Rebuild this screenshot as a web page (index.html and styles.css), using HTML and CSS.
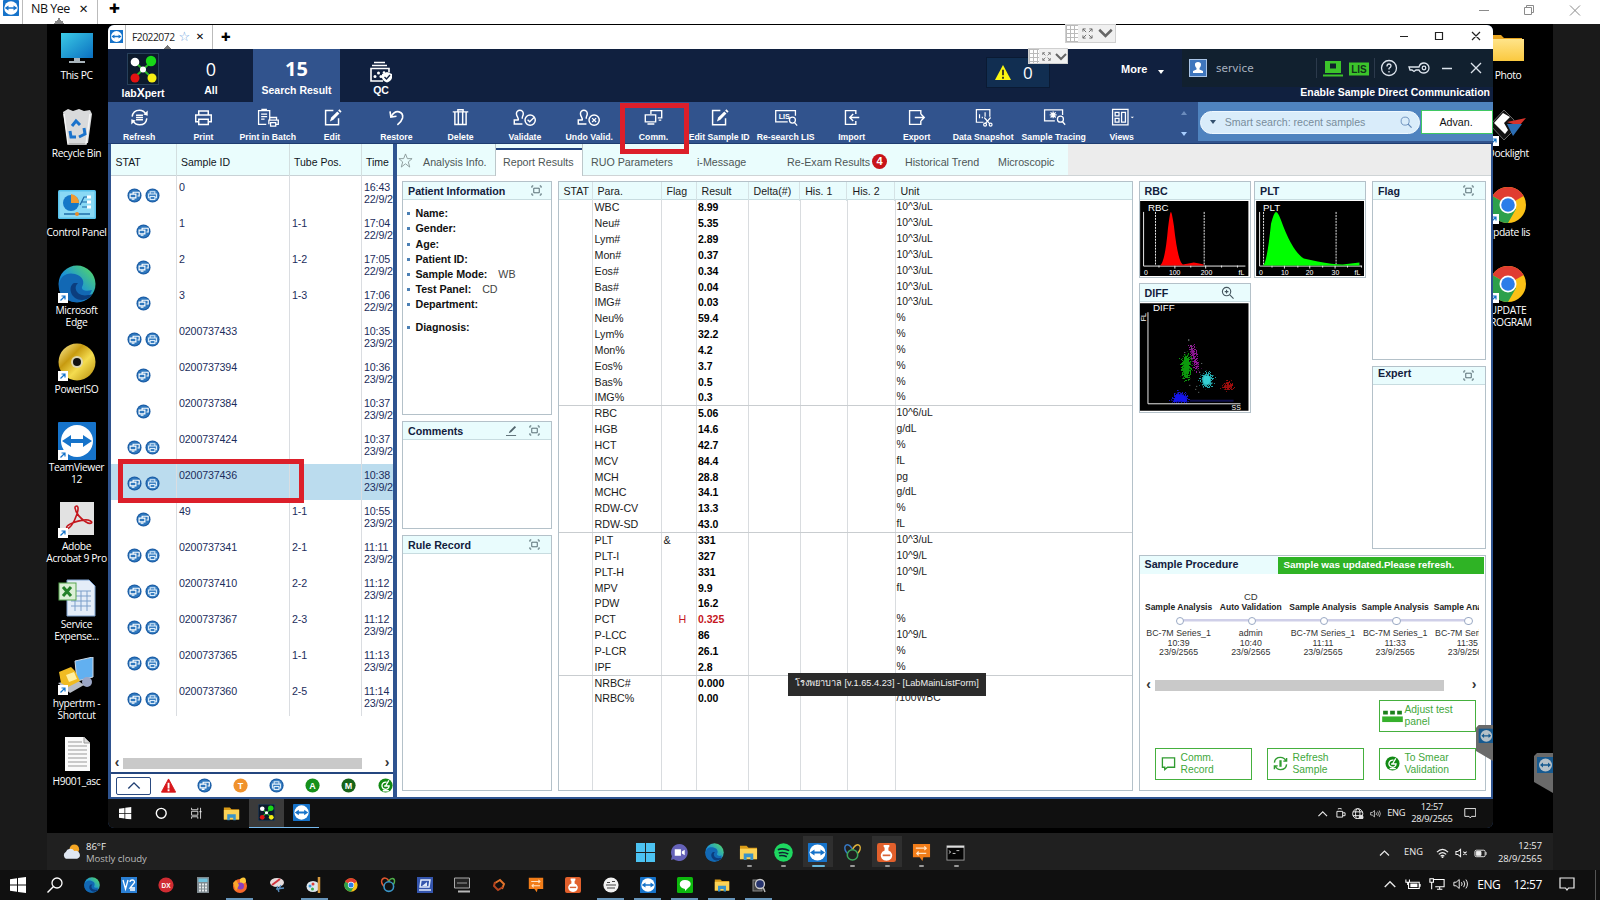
FILE: index.html
```html
<!DOCTYPE html>
<html lang="en">
<head>
<meta charset="utf-8">
<title>labXpert remote session</title>
<link rel="stylesheet" href="styles.css">
</head>
<body>
<svg class="defs" width="0" height="0">
  <defs>
    <linearGradient id="gEdge" x1="0" y1="1" x2="1" y2="0"><stop offset="0" stop-color="#0c4f9c"/><stop offset=".45" stop-color="#1b93d8"/><stop offset="1" stop-color="#5be05a"/></linearGradient>
    <linearGradient id="gScreen" x1="0" y1="0" x2="1" y2="1"><stop offset="0" stop-color="#3bcbe6"/><stop offset="1" stop-color="#0a6fc0"/></linearGradient>
    <linearGradient id="gGold" x1="0" y1="0" x2="1" y2="1"><stop offset="0" stop-color="#fff2a0"/><stop offset=".35" stop-color="#c79a10"/><stop offset=".6" stop-color="#f4dc50"/><stop offset="1" stop-color="#b38806"/></linearGradient>
    <linearGradient id="gFolder" x1="0" y1="0" x2="0" y2="1"><stop offset="0" stop-color="#ffe48a"/><stop offset="1" stop-color="#fbc93f"/></linearGradient>
    <filter id="speckle" x="-60%" y="-60%" width="220%" height="220%"><feTurbulence type="fractalNoise" baseFrequency=".9" numOctaves="2" seed="4"/><feDisplacementMap in="SourceGraphic" scale="13" xChannelSelector="R" yChannelSelector="G"/></filter>
    <symbol id="tv" viewBox="0 0 38 38"><rect width="38" height="38" rx="1" fill="#1673ca"/><circle cx="19" cy="19" r="16" fill="#fff"/><path d="M4 19l9-6v4h12v-4l9 6-9 6v-4H13v4z" fill="#1673ca"/></symbol>
    <symbol id="edge" viewBox="0 0 38 38"><circle cx="19" cy="19" r="18.5" fill="url(#gEdge)"/><path d="M1 22C1 10 10 7 17 9c8 2 10 8 7 13-1 3 4 5 10 3-3 8-10 12.500-17 12C7 36 1 30 1 22z" fill="#1268b4"/><path d="M16 18c-7 4-3 17 8 17 5 0 9-3 10-6-8 3-14 1-16-4-1-3 0-5 2-7z" fill="#0b3d7e"/></symbol>
    <symbol id="chrome" viewBox="0 0 38 38"><circle cx="19" cy="19" r="18" fill="#fbc116"/><path d="M19 19L3.400 10A18 18 0 0 1 34.600 10z" fill="#e03c31"/><path d="M3.400 10A18 18 0 0 0 19 37l8-14-8-4z" fill="#2da04b"/><circle cx="19" cy="19" r="8.500" fill="#fff"/><circle cx="19" cy="19" r="6.800" fill="#2b7de9"/></symbol>
    <symbol id="short" viewBox="0 0 10 10"><rect width="10" height="10" fill="#fff"/><path d="M2.500 7.500L7 3M3.500 3H7v3.500" fill="none" stroke="#1373c9" stroke-width="1.200"/></symbol>
    <symbol id="folder" viewBox="0 0 20 20"><path d="M1 3h7l2 2h9v12H1z" fill="#d99b17"/><path d="M1 6h18v11H1z" fill="#fbd357"/><path d="M5 11h10v7h-3v-3H8v3H5z" fill="#3a94c9"/></symbol>
    <symbol id="xpert" viewBox="0 0 32 32"><rect x=".5" y=".5" width="31" height="31" fill="#0c1a2c" stroke="#27405a"/><path d="M8 9l16 15M24 9L8 24" stroke="#2bb52b" stroke-width="2"/><circle cx="8" cy="9" r="4.300" fill="#fff"/><circle cx="24" cy="8" r="5.200" fill="#18d818"/><circle cx="8" cy="25" r="4.500" fill="#e31212"/><circle cx="25" cy="25" r="4.500" fill="#f6ee13"/><circle cx="16" cy="16.500" r="3" fill="#fff"/></symbol>
    <symbol id="ccomm" viewBox="0 0 16 16"><circle cx="8" cy="8" r="7.500" fill="#185aa3"/><circle cx="8" cy="8" r="6.300" fill="#2f78be"/><path d="M6.500 6V4.500H13v4h-1.800M3.300 6.500h6.200v4H3.300zM5 12h3" fill="none" stroke="#fff" stroke-width="1.200"/></symbol>
    <symbol id="cprint" viewBox="0 0 16 16"><circle cx="8" cy="8" r="7.500" fill="#185aa3"/><circle cx="8" cy="8" r="6.300" fill="#3b80c2"/><path d="M5.500 6.500V4h5v2.500M5 10.500H3.800v-4h8.400v4H11M5.500 9h5v3.300h-5z" fill="none" stroke="#dcecfa" stroke-width="1.100"/></symbol>
    <symbol id="expand" viewBox="0 0 12 12"><path d="M3 3.500h6v5H3zM1 3V1h1.500M9.500 1H11v2M11 9v2H9.500M2.500 11H1V9" fill="none" stroke="#4a6068" stroke-width="1"/></symbol>
    <symbol id="pen" viewBox="0 0 22 22"><path d="M12 3H3v16.500h15V12" fill="none" stroke="#fff" stroke-width="1.700"/><path d="M8 15.500l1.500-4.500 7-7 2.500 2.500-7 7z" fill="#fff"/><path d="M17.500 3l1.500-1.500L21.500 4 20 5.500z" fill="#fff"/></symbol>
    <symbol id="stamp" viewBox="0 0 28 22"><path d="M11 18.500H1.500V14H6c1-3-2-4-2-7.500a4 4 0 0 1 8 0c0 3-2 4-1 6" fill="none" stroke="#fff" stroke-width="1.700"/><circle cx="20" cy="14" r="6" fill="none" stroke="#fff" stroke-width="1.700"/></symbol>
    <symbol id="win10" viewBox="0 0 16 16"><path d="M0 2.200L7 1.200V7.600H0zM8 1l8-1v7.600H8zM0 8.500h7v6.300l-7-1zM8 8.500h8V16l-8-1z" fill="#fff"/></symbol>
    <symbol id="up" viewBox="0 0 12 12"><path d="M1.500 8.500L6 4l4.500 4.500" fill="none" stroke="#e8e8e8" stroke-width="1.200"/></symbol>
    <symbol id="speaker" viewBox="0 0 18 14"><path d="M1 5v4h2.500L7 12V2L3.500 5zM9.500 5q1.500 2 0 4M12 3.500q2.500 3.500 0 7M14.500 2q3.500 5 0 10" fill="none" stroke="#eee" stroke-width="1.100"/></symbol>
    <symbol id="note" viewBox="0 0 16 16"><path d="M1 2h14v10H9.500L8 14l-1.500-2H1z" fill="none" stroke="#eee" stroke-width="1.200"/></symbol>
    <symbol id="flask" viewBox="0 0 20 20"><rect width="20" height="20" rx="2.500" fill="#e2602c"/><path d="M7 2h6v2l-1 1v3a6 5.500 0 1 1-4 0V5L7 4z" fill="#fff"/><path d="M6 13h8" stroke="#d9643a" stroke-width="1.800"/></symbol>
    <symbol id="board" viewBox="0 0 20 20"><path d="M1 1h18v14h-7l-1 4-3-4H1z" fill="#f27d19"/><path d="M4 5.500h11m-2-2l2 2-2 2M15 11H5m2-2l-2 2 2 2" stroke="#ffe3c5" stroke-width="1.300" fill="none"/></symbol>
    <symbol id="rings" viewBox="0 0 20 20"><g fill="none" stroke-width="1.600"><ellipse cx="6" cy="7" rx="3.500" ry="5.500" transform="rotate(-30 6 7)" stroke="#3578c4"/><ellipse cx="14" cy="7" rx="3.500" ry="5.500" transform="rotate(30 14 7)" stroke="#e0b43b"/><circle cx="10" cy="12.500" r="5.500" stroke="#3ba65c" fill="#202020"/></g></symbol>
    <symbol id="float" viewBox="0 0 19 40"><path d="M19 0H3L0 3v26l19 11z" fill="#6a6a6a"/><rect x="3" y="4" width="16" height="16" fill="#175a90"/><circle cx="11.500" cy="12" r="6.500" fill="#b5c0c8"/><path d="M6 12l3-2.500v1.700h5V9.500l3 2.500-3 2.500v-1.700H9v1.700z" fill="#175a90"/></symbol>
    <symbol id="smear" viewBox="0 0 16 16"><circle cx="8" cy="8" r="7.500" fill="#128a14"/><path d="M11.500 2.500L8 8.500M9 4.500A3.800 3.800 0 1 0 11.800 8.500H6.500M8.500 12v1.500M5 13.500h6.500" fill="none" stroke="#fff" stroke-width="1.400"/></symbol>
    <symbol id="arrows" viewBox="0 0 12 12"><path d="M1 4V1h3M8 1h3v3M11 8v3H8M4 11H1V8M1 1l3.500 3.500M11 1L7.500 4.500M1 11l3.500-3.500M11 11L7.500 7.500" fill="none" stroke="#666" stroke-width="1"/></symbol>
  </defs>
</svg>

<header class="outer-tabs">
  <svg class="tvi"><use href="#tv"/></svg>
  <div class="otab">NB Yee <b>✕</b></div>
  <b class="plus">✚</b>
  <svg class="winctl" viewBox="0 0 110 14"><g fill="none" stroke="#8b8b8b"><path d="M2 7.500h10M47.500 4.500h7v7h-7zM49.500 4.500v-2h7v7h-2M93 2.500l10 10M103 2.500l-10 10"/></g></svg>
</header>

<main class="remote">
  <section class="desk-col left">
    <div class="dicon"><svg viewBox="0 0 38 38"><rect x="3" y="3" width="32" height="25" fill="url(#gScreen)"/><path d="M16 28h6v3h5v2H11v-2h5z" fill="#a9b4bb"/></svg><span>This PC</span></div>
    <div class="dicon"><svg viewBox="0 0 38 38"><path d="M5 4l5-3 5 2 6-2 5 2 6-1 2 4-4 29H10z" fill="#d9dadb"/><path d="M6 6l4 30h18l4-30" fill="none" stroke="#f5f5f5" stroke-width="1.500"/><g fill="none" stroke="#1b73cc" stroke-width="3"><path d="M14 18l4-5 4 4M26 20l1 6-6 3M18 29h-5l-1-6"/></g></svg><span>Recycle Bin</span></div>
    <div class="dicon"><svg viewBox="0 0 38 38"><rect x="0" y="4" width="38" height="29" rx="1.500" fill="#58c1ea"/><rect x="1.500" y="5.500" width="35" height="26" fill="#8ad9f5"/><circle cx="13" cy="17" r="8" fill="#1678c8"/><path d="M13 17V8a9 9 0 0 1 8 9z" fill="#f19a31"/><path d="M22 19l4-8h3M24 16h5M24 21h5" stroke="#1d6aa7" stroke-width="1.200" fill="none"/><path d="M29 11h4M29 16h4M29 21h4" stroke="#fff" stroke-width="3"/><path d="M6 28h26" stroke="#1c6ca8" stroke-width="1.500"/><circle cx="19" cy="28" r="2" fill="#e98b28"/></svg><span>Control Panel</span></div>
    <div class="dicon"><svg><use href="#edge"/></svg><svg class="sc"><use href="#short"/></svg><span>Microsoft<br>Edge</span></div>
    <div class="dicon"><svg viewBox="0 0 38 38"><circle cx="19" cy="19" r="18.500" fill="url(#gGold)"/><circle cx="19" cy="19" r="6" fill="#ddd6b0"/><circle cx="19" cy="19" r="4" fill="#111"/></svg><svg class="sc"><use href="#short"/></svg><span>PowerISO</span></div>
    <div class="dicon"><svg><use href="#tv"/></svg><svg class="sc"><use href="#short"/></svg><span>TeamViewer<br>12</span></div>
    <div class="dicon"><svg viewBox="0 0 38 38"><rect x="2" y="2" width="34" height="33" fill="#e2e2e2"/><path d="M17 7c3-3 4 1 2 7-3 9-8 16-10 14-3-3 14-9 21-8 7 2 3 5-2 2-5-3-11-9-11-15z" fill="none" stroke="#c4161c" stroke-width="1.600"/></svg><svg class="sc"><use href="#short"/></svg><span>Adobe<br>Acrobat 9 Pro</span></div>
    <div class="dicon"><svg viewBox="0 0 38 38"><path d="M9 1h22l6 6v30H9z" fill="#e4edf8" stroke="#7fa3d0"/><path d="M13 12h20M13 17h20M13 22h20M13 27h20M17 12v20M23 12v20M29 12v20" stroke="#7c9fca"/><rect x="1" y="4" width="17" height="17" fill="#dcf0d7" stroke="#58a550"/><path d="M5 8l8 9M13 8l-8 9" stroke="#24812a" stroke-width="3"/></svg><span>Service<br>Expense...</span></div>
    <div class="dicon"><svg viewBox="0 0 38 38"><path d="M17 4l18-4v20l-16 4z" fill="#62b0f0" stroke="#cfd9e6"/><circle cx="29" cy="25" r="5" fill="#9ba6c6"/><path d="M0 26l18-4 8 6-14 8z" fill="#b8bdc7"/><path d="M1 15l12-5 4 4 5 10-12 6-7-4z" fill="#f0bb22"/><path d="M8 18l8-3 3 7-8 3z" fill="#fff0a2"/></svg><svg class="sc"><use href="#short"/></svg><span>hypertrm -<br>Shortcut</span></div>
    <div class="dicon"><svg viewBox="0 0 38 38"><path d="M7 2h19l6 6v28H7z" fill="#fafafa"/><path d="M10 7h14M10 11h19M10 15h19M10 19h19M10 23h19M10 27h19M10 31h19" stroke="#999"/><path d="M26 2v6h6" fill="#ddd" stroke="#999"/></svg><span>H9001_asc</span></div>
  </section>

  <section class="desk-col right">
    <div class="dicon"><svg viewBox="0 0 38 38"><path d="M0 5h12l3 3h18v6H0z" fill="#e8a520"/><path d="M0 9h35v22H0z" fill="url(#gFolder)"/></svg><span>Photo</span></div>
    <div class="dicon"><svg viewBox="0 0 38 38"><path d="M15 2L1 17l14 15 10-10V12z" fill="#111" stroke="#666"/><path d="M14 5L5 15l11 11 3-4-4-7 6-6z" fill="#fff"/><path d="M18 14l19-4-7 8z" fill="#d8322a"/><path d="M18 16l15 0-9 12z" fill="#2c6eb5"/></svg><svg class="sc"><use href="#short"/></svg><span>Docklight</span></div>
    <div class="dicon"><svg><use href="#chrome"/></svg><svg class="sc"><use href="#short"/></svg><span>Update lis</span></div>
    <div class="dicon"><svg><use href="#chrome"/></svg><svg class="sc"><use href="#short"/></svg><span>UPDATE<br>PROGRAM</span></div>
  </section>

  <section class="window">
    <div class="win-tabs">
      <svg class="tvi"><use href="#tv"/></svg>
      <div class="wtab">F2022072 <i>☆</i><b>✕</b></div>
      <b class="plus">✚</b>
      <svg class="winctl" viewBox="0 0 90 14"><g fill="none" stroke="#222" stroke-width="1.200"><path d="M3 7.500h8M38.500 3.500h7v7h-7zM75 3l8 8M83 3l-8 8"/></g></svg>
    </div>

    <div class="app-head">
      <div class="logo"><svg><use href="#xpert"/></svg><b>lab<em>X</em>pert</b></div>
      <div class="hcell all"><span>0</span><b>All</b></div>
      <div class="hcell found"><strong>15</strong><b>Search Result</b></div>
      <div class="hcell qc"><svg viewBox="0 0 24 22"><g fill="none" stroke="#fff" stroke-width="1.600"><path d="M5 1.500h11M3 4.500h15M14 20H2V7.500h18v4"/></g><g fill="#fff"><circle cx="6" cy="15.500" r="1.500"/><circle cx="9.500" cy="12" r="1.500"/><circle cx="12" cy="15.500" r="1.500"/><circle cx="15" cy="11.500" r="1.300"/></g><path d="M18 11l5 2v4q-1 3-5 4.500-4-1.500-5-4.500v-4z" fill="#fff"/><path d="M15.500 16l2 2 3.500-4" stroke="#10203f" fill="none" stroke-width="1.300"/></svg><b>QC</b></div>
      <div class="alert"><svg viewBox="0 0 18 18"><path d="M9 1l8.500 16H.5z" fill="#fbf712"/><path d="M9 6v6M9 13.500v2" stroke="#222" stroke-width="1.800"/></svg><span>0</span></div>
      <div class="more">More <i></i></div>
      <div class="user">
        <div class="user-row">
          <svg class="avatar" viewBox="0 0 18 18"><rect x=".5" y=".5" width="17" height="17" fill="#3f76bd" stroke="#a9c4e6"/><path d="M9 3c4 0 3.500 4 1.500 6v1.500L14 12v2H4v-2l3.500-1.500V9C5.500 7 5 3 9 3z" fill="#fff"/></svg>
          <span class="uname">service</span>
          <svg class="status" viewBox="0 0 178 28"><path d="M5.500 4v20M63.500 4v20" stroke="#2c3a4c"/><rect x="14" y="7" width="16" height="12" fill="#3cc42b"/><rect x="19" y="9.500" width="6" height="5" fill="#10202c"/><path d="M12 21.500h20" stroke="#3cc42b" stroke-width="2"/><rect x="38" y="8.500" width="20" height="13" fill="#3cc42b"/><text x="48" y="19">LIS</text><g fill="none" stroke="#dce3ec" stroke-width="1.300"><circle cx="78" cy="14" r="7.500"/><path d="M76 12.500q0-2.500 2-2.500t2 2q0 1-2 2.500v1M78 17v1.400M98 13h10q1-4 5-4a5 5 0 0 1 0 10q-4 0-5-3h-3l-2 1.500-2-1.500h-2zM131 14.500h10M160 9l10 10M170 9l-10 10"/><circle cx="113" cy="14" r="1.800"/></g></svg>
        </div>
        <b class="direct">Enable Sample Direct Communication</b>
      </div>
    </div>

    <nav class="toolbar">
      <div class="tool"><svg viewBox="0 0 22 22"><g fill="none" stroke="#fff" stroke-width="1.700"><path d="M2.500 10Q3.500 2.500 11 2.500q5 0 7.500 4.500M19.500 12q-1 7.500-8.500 7.500-5 0-7.500-4.500M7 8.500h8M7 11h8M7 13.500h8"/></g><path d="M20.500 3v6l-5-1.500zM1.500 19v-6l5 1.500z" fill="#fff"/></svg>Refresh</div>
      <div class="tool"><svg viewBox="0 0 22 22"><g fill="none" stroke="#fff" stroke-width="1.700"><path d="M5.500 8V3.500h11V8M5.500 16H2V8h18v8h-3.500M5.500 13h11v6h-11z"/></g></svg>Print</div>
      <div class="tool"><svg class="wide" viewBox="0 0 28 22"><g fill="none" stroke="#fff" stroke-width="1.500"><path d="M12 19H3V3h13v8M7 3V1.500h5V3M6 7h7M6 10h7M6 13h4M16 14v-3h8v3M15 19v-5h11v5h-3M17 17h6v4h-6z"/></g></svg>Print in Batch</div>
      <div class="tool"><svg><use href="#pen"/></svg>Edit</div>
      <div class="tool"><svg viewBox="0 0 22 22"><path d="M5 9.500Q9 3 14 4.500t4 7q-1 4-6 8" fill="none" stroke="#fff" stroke-width="1.900"/><path d="M3.500 4l1 6.500 6.500-1" fill="none" stroke="#fff" stroke-width="1.900"/></svg>Restore</div>
      <div class="tool"><svg viewBox="0 0 22 22"><path d="M2 4.500h18M8 4V2h6v2M4.500 5v14h13V5M8.500 5v14M13.500 5v14" fill="none" stroke="#fff" stroke-width="1.700"/></svg>Delete</div>
      <div class="tool"><svg class="wide" viewBox="0 0 28 22"><use href="#stamp"/><path d="M17 13.500l2.500 2.500 5-5" fill="none" stroke="#fff" stroke-width="1.600"/></svg>Validate</div>
      <div class="tool"><svg class="wide" viewBox="0 0 28 22"><use href="#stamp"/><path d="M17.700 11.700l4.600 4.600M22.300 11.700l-4.600 4.600" stroke="#fff" stroke-width="1.500"/></svg>Undo Valid.</div>
      <div class="tool marked"><svg viewBox="0 0 22 22"><path d="M8 7V3h12.500v8.500H16M1.500 8h12v8h-12zM4 18.500h8M17 14h3" fill="none" stroke="#fff" stroke-width="1.600"/></svg>Comm.<span class="redbox comm"></span></div>
      <div class="tool"><svg><use href="#pen"/></svg>Edit Sample ID</div>
      <div class="tool"><svg class="wide" viewBox="0 0 28 22"><g fill="none" stroke="#fff" stroke-width="1.500"><path d="M16 16H2V3h23v6"/><circle cx="21.500" cy="14" r="3.500"/><path d="M24 17l3 3.500"/></g><text x="12" y="12.800">LIS</text></svg>Re-search LIS</div>
      <div class="tool"><svg viewBox="0 0 22 22"><path d="M16 7V3H4v16h12v-4M20 11H9m4-4l-4 4 4 4" fill="none" stroke="#fff" stroke-width="1.600"/></svg>Import</div>
      <div class="tool"><svg viewBox="0 0 22 22"><path d="M16 7V3H3v16h13v-4M9 11h11m-4-4l4 4-4 4" fill="none" stroke="#fff" stroke-width="1.600"/></svg>Export</div>
      <div class="tool"><svg viewBox="0 0 24 24"><g fill="none" stroke="#fff" stroke-width="1.500"><path d="M12 18H3V2h17v9M7 13V8M10.500 13v-2M14 11V5.500M13 12l7 8M21 12l-7 8"/><circle cx="14" cy="21" r="1.800"/><circle cx="21" cy="21" r="1.800"/></g></svg>Data Snapshot</div>
      <div class="tool"><svg class="wide" viewBox="0 0 28 22"><g fill="none" stroke="#fff" stroke-width="1.500"><path d="M15 15H3V2h21v6M10 5l6 6M16 5l-6 6M13 4v8M9 8h8"/><circle cx="21.500" cy="13" r="3.500"/><path d="M24 16l3 3.500"/></g></svg>Sample Tracing</div>
      <div class="tool"><svg class="wide" viewBox="0 0 28 22"><g fill="none" stroke="#fff" stroke-width="1.500"><path d="M3 1.500h18v18H3zM6 5h4.500v4H6zM6 12h4.500v4.500H6zM13.500 5h4.500v11.500h-4.500z"/></g><path d="M24 10h4l-2 2z" fill="#fff"/></svg>Views</div>
      <div class="spin"><i class="inc"></i><i class="dec"></i></div>
      <div class="search">
        <div class="pill"><i></i><span>Smart search: recent samples</span><svg viewBox="0 0 14 14"><circle cx="6" cy="6" r="4.700" fill="none" stroke="#6187b6"/><path d="M9.500 9.500l4 4" stroke="#6187b6" stroke-width="1.400"/></svg></div>
        <div class="adv">Advan.</div>
      </div>
    </nav>

    <div class="work">
      <aside class="list">
        <div class="lhead"><span>STAT</span><span>Sample ID</span><span>Tube Pos.</span><span>Time</span></div>
        <div class="lrows">
          <div class="lrow"><span><svg><use href="#ccomm"/></svg><svg><use href="#cprint"/></svg></span><span>0</span><span></span><span>16:43<br>22/9/2</span></div>
          <div class="lrow"><span><svg><use href="#ccomm"/></svg></span><span>1</span><span>1-1</span><span>17:04<br>22/9/2</span></div>
          <div class="lrow"><span><svg><use href="#ccomm"/></svg></span><span>2</span><span>1-2</span><span>17:05<br>22/9/2</span></div>
          <div class="lrow"><span><svg><use href="#ccomm"/></svg></span><span>3</span><span>1-3</span><span>17:06<br>22/9/2</span></div>
          <div class="lrow"><span><svg><use href="#ccomm"/></svg><svg><use href="#cprint"/></svg></span><span>0200737433</span><span></span><span>10:35<br>23/9/2</span></div>
          <div class="lrow"><span><svg><use href="#ccomm"/></svg></span><span>0200737394</span><span></span><span>10:36<br>23/9/2</span></div>
          <div class="lrow"><span><svg><use href="#ccomm"/></svg></span><span>0200737384</span><span></span><span>10:37<br>23/9/2</span></div>
          <div class="lrow"><span><svg><use href="#ccomm"/></svg><svg><use href="#cprint"/></svg></span><span>0200737424</span><span></span><span>10:37<br>23/9/2</span></div>
          <div class="lrow sel"><span><svg><use href="#ccomm"/></svg><svg><use href="#cprint"/></svg></span><span>0200737436</span><span></span><span>10:38<br>23/9/2</span><i class="redbox row"></i></div>
          <div class="lrow"><span><svg><use href="#ccomm"/></svg></span><span>49</span><span>1-1</span><span>10:55<br>23/9/2</span></div>
          <div class="lrow"><span><svg><use href="#ccomm"/></svg><svg><use href="#cprint"/></svg></span><span>0200737341</span><span>2-1</span><span>11:11<br>23/9/2</span></div>
          <div class="lrow"><span><svg><use href="#ccomm"/></svg><svg><use href="#cprint"/></svg></span><span>0200737410</span><span>2-2</span><span>11:12<br>23/9/2</span></div>
          <div class="lrow"><span><svg><use href="#ccomm"/></svg><svg><use href="#cprint"/></svg></span><span>0200737367</span><span>2-3</span><span>11:12<br>23/9/2</span></div>
          <div class="lrow"><span><svg><use href="#ccomm"/></svg><svg><use href="#cprint"/></svg></span><span>0200737365</span><span>1-1</span><span>11:13<br>23/9/2</span></div>
          <div class="lrow"><span><svg><use href="#ccomm"/></svg><svg><use href="#cprint"/></svg></span><span>0200737360</span><span>2-5</span><span>11:14<br>23/9/2</span></div>
        </div>
        <div class="scroll lscroll"><i>‹</i><div class="track"></div><i>›</i></div>
        <div class="legend">
          <div class="upbtn"><svg viewBox="0 0 16 10"><path d="M1.500 8.500L8 2l6.500 6.500" fill="none" stroke="#1f3e72" stroke-width="1.600"/></svg></div>
          <svg viewBox="0 0 16 16"><path d="M8 1l7.500 14H.5z" fill="#d8171b" stroke="#d8171b"/><path d="M8 5v6M8 12v2" stroke="#fff" stroke-width="2"/></svg>
          <svg><use href="#ccomm"/></svg>
          <svg viewBox="0 0 16 16"><circle cx="8" cy="8" r="7.500" fill="#f0922c"/><text x="8" y="11.500">T</text></svg>
          <svg><use href="#cprint"/></svg>
          <svg viewBox="0 0 16 16"><circle cx="8" cy="8" r="7.500" fill="#15901a"/><text x="8" y="11.500">A</text></svg>
          <svg viewBox="0 0 16 16"><circle cx="8" cy="8" r="7.500" fill="#176419"/><text x="8" y="11.500">M</text></svg>
          <svg><use href="#smear"/></svg>
        </div>
      </aside>

      <section class="detail">
        <div class="tabs">
          <div class="tab star"><svg viewBox="0 0 16 16"><path d="M8 1l2 5h5l-4 3.500 1.500 5.500L8 11.500 3.500 15 5 9.500 1 6h5z" fill="none" stroke="#8b9a9a"/></svg></div>
          <div class="tab info">Analysis Info.</div>
          <div class="tab on">Report Results</div>
          <div class="tab ruo">RUO Parameters</div>
          <div class="tab imsg">i-Message</div>
          <div class="tab reex">Re-Exam Results<b>4</b></div>
          <div class="tab hist">Historical Trend</div>
          <div class="tab micro">Microscopic</div>
        </div>
        <div class="panes">
          <div class="col-a">
            <div class="panel pinfo"><h3>Patient Information<svg><use href="#expand"/></svg></h3>
              <ul><li><b>Name:</b></li><li><b>Gender:</b></li><li><b>Age:</b></li><li><b>Patient ID:</b></li><li><b>Sample Mode:</b><span>WB</span></li><li><b>Test Panel:</b><span>CD</span></li><li><b>Department:</b></li><li class="gap"><b>Diagnosis:</b></li></ul></div>
            <div class="panel pcom"><h3>Comments<svg class="edit" viewBox="0 0 12 12"><path d="M3 9l1-2.500L9.500 1 11 2.500 5.500 8z" fill="#52646c"/><path d="M0 11.500h11" stroke="#52646c"/></svg><svg><use href="#expand"/></svg></h3></div>
            <div class="panel prule"><h3>Rule Record<svg><use href="#expand"/></svg></h3></div>
          </div>

          <div class="panel results">
            <div class="rrow rhead"><span>STAT</span><span>Para.</span><span>Flag</span><span>Result</span><span>Delta(#)</span><span>His. 1</span><span>His. 2</span><span>Unit</span></div>
            <div class="rbody">
              <div class="group">
                <div class="rrow"><span></span><span>WBC</span><span></span><b>8.99</b><em>10^3/uL</em></div>
                <div class="rrow"><span></span><span>Neu#</span><span></span><b>5.35</b><em>10^3/uL</em></div>
                <div class="rrow"><span></span><span>Lym#</span><span></span><b>2.89</b><em>10^3/uL</em></div>
                <div class="rrow"><span></span><span>Mon#</span><span></span><b>0.37</b><em>10^3/uL</em></div>
                <div class="rrow"><span></span><span>Eos#</span><span></span><b>0.34</b><em>10^3/uL</em></div>
                <div class="rrow"><span></span><span>Bas#</span><span></span><b>0.04</b><em>10^3/uL</em></div>
                <div class="rrow"><span></span><span>IMG#</span><span></span><b>0.03</b><em>10^3/uL</em></div>
                <div class="rrow"><span></span><span>Neu%</span><span></span><b>59.4</b><em>%</em></div>
                <div class="rrow"><span></span><span>Lym%</span><span></span><b>32.2</b><em>%</em></div>
                <div class="rrow"><span></span><span>Mon%</span><span></span><b>4.2</b><em>%</em></div>
                <div class="rrow"><span></span><span>Eos%</span><span></span><b>3.7</b><em>%</em></div>
                <div class="rrow"><span></span><span>Bas%</span><span></span><b>0.5</b><em>%</em></div>
                <div class="rrow"><span></span><span>IMG%</span><span></span><b>0.3</b><em>%</em></div>
              </div>
              <div class="group">
                <div class="rrow"><span></span><span>RBC</span><span></span><b>5.06</b><em>10^6/uL</em></div>
                <div class="rrow"><span></span><span>HGB</span><span></span><b>14.6</b><em>g/dL</em></div>
                <div class="rrow"><span></span><span>HCT</span><span></span><b>42.7</b><em>%</em></div>
                <div class="rrow"><span></span><span>MCV</span><span></span><b>84.4</b><em>fL</em></div>
                <div class="rrow"><span></span><span>MCH</span><span></span><b>28.8</b><em>pg</em></div>
                <div class="rrow"><span></span><span>MCHC</span><span></span><b>34.1</b><em>g/dL</em></div>
                <div class="rrow"><span></span><span>RDW-CV</span><span></span><b>13.3</b><em>%</em></div>
                <div class="rrow"><span></span><span>RDW-SD</span><span></span><b>43.0</b><em>fL</em></div>
              </div>
              <div class="group">
                <div class="rrow"><span></span><span>PLT</span><span>&amp;</span><b>331</b><em>10^3/uL</em></div>
                <div class="rrow"><span></span><span>PLT-I</span><span></span><b>327</b><em>10^9/L</em></div>
                <div class="rrow"><span></span><span>PLT-H</span><span></span><b>331</b><em>10^9/L</em></div>
                <div class="rrow"><span></span><span>MPV</span><span></span><b>9.9</b><em>fL</em></div>
                <div class="rrow"><span></span><span>PDW</span><span></span><b>16.2</b><em></em></div>
                <div class="rrow high"><span></span><span>PCT</span><span class="hflag">H</span><b>0.325</b><em>%</em></div>
                <div class="rrow"><span></span><span>P-LCC</span><span></span><b>86</b><em>10^9/L</em></div>
                <div class="rrow"><span></span><span>P-LCR</span><span></span><b>26.1</b><em>%</em></div>
                <div class="rrow"><span></span><span>IPF</span><span></span><b>2.8</b><em>%</em></div>
              </div>
              <div class="group">
                <div class="rrow"><span></span><span>NRBC#</span><span></span><b>0.000</b><em></em></div>
                <div class="rrow"><span></span><span>NRBC%</span><span></span><b>0.00</b><em>/100WBC</em></div>
              </div>
            </div>
          </div>

          <div class="col-c">
            <div class="upper">
              <div class="graphs">
                <div class="panel graph"><h3>RBC</h3>
                  <svg viewBox="0 0 109 76"><rect width="109" height="76"/><path d="M3.500 11v54.500H106M19 65v2M35 65v3M51 65v2M66 65v3M82 65v2M98 65v2" class="ax"/><path d="M15.500 11v54M64.500 11v54" class="dash"/><path d="M20 65Q25 62 28 28 30 11 31 11T34 25Q38 61 43 64q6-1 11-2 6 1 10 2v1z" fill="#f00"/><text x="8" y="10" class="big">RBC</text><text x="4" y="75">0</text><text x="29" y="75">100</text><text x="61" y="75">200</text><text x="99" y="75">fL</text></svg></div>
                <div class="panel graph"><h3>PLT</h3>
                  <svg viewBox="0 0 109 76"><rect width="109" height="76"/><path d="M3.500 11v54.500H106M16 65v2M28.500 65v3M42 65v2M54 65v3M67 65v2M79.500 65v3M92 65v2M106 65v2" class="ax"/><path d="M7.500 11v54M80.500 11v54" class="dash"/><path d="M7 65Q11 62 15 23q3-12 5-12t5 8Q36 50 48 58l14 3q15 3 25 3l17-2v3z" fill="#0f0"/><text x="7" y="10" class="big">PLT</text><text x="3" y="75">0</text><text x="25" y="75">10</text><text x="50" y="75">20</text><text x="76" y="75">30</text><text x="99" y="75">fL</text></svg></div>
                <div class="panel graph diff"><h3>DIFF<svg class="mag" viewBox="0 0 14 14"><g fill="none" stroke="#45565e" stroke-width="1.200"><circle cx="6" cy="6" r="4.500"/><path d="M9.500 9.500l4 4M4 6h4M6 4v4"/></g></svg></h3>
                  <svg viewBox="0 0 109 108"><rect width="109" height="108"/><g filter="url(#speckle)"><ellipse cx="46.500" cy="64" rx="4.500" ry="13" fill="#0c9a0c"/><ellipse cx="55" cy="55" rx="2.500" ry="14" transform="rotate(-12 55 55)" fill="#8f1894"/><ellipse cx="67.500" cy="77" rx="6" ry="7.500" fill="#25a9ad"/><ellipse cx="88.500" cy="83" rx="5" ry="4" fill="#a01010"/></g><ellipse cx="46" cy="63" rx="2.500" ry="9" fill="#0c9a0c"/><ellipse cx="67" cy="77" rx="3.500" ry="4.500" fill="#35cfd3"/><path d="M32 99l5-10 11 3 2 4-2 3z" fill="#1414c8" filter="url(#speckle)"/><path d="M33 99l4-8 8 2 3 6z" fill="#1414ee"/><path d="M50 98h44" stroke="#10104e" stroke-width="2"/><path d="M49 36v2M51 42v1M52 45v1M45 49v1M60 69v1M62 60v1M50 82v1M56 86v1M59 89v1M57 83v1" stroke="#75807c" stroke-width="1"/><path d="M8 9v92h93" class="ax"/><text x="13" y="8" class="big">DIFF</text><text transform="translate(6 18) rotate(-90)">FL</text><text x="92" y="107">SS</text></svg></div>
              </div>
              <div class="notes">
                <div class="panel pflag"><h3>Flag<svg><use href="#expand"/></svg></h3></div>
                <div class="panel pexp"><h3>Expert<svg><use href="#expand"/></svg></h3></div>
              </div>
            </div>
            <div class="panel proc">
              <div class="proc-head"><b>Sample Procedure</b><span>Sample was updated.Please refresh.</span></div>
              <div class="steps">
                <div class="step"><i></i><b>Sample Analysis</b><u></u><p>BC-7M Series_1<br>10:39<br>23/9/2565</p></div>
                <div class="step"><i>CD</i><b>Auto Validation</b><u></u><p>admin<br>10:40<br>23/9/2565</p></div>
                <div class="step"><i></i><b>Sample Analysis</b><u></u><p>BC-7M Series_1<br>11:11<br>23/9/2565</p></div>
                <div class="step"><i></i><b>Sample Analysis</b><u></u><p>BC-7M Series_1<br>11:33<br>23/9/2565</p></div>
                <div class="step last"><i></i><b>Sample Analysis</b><u></u><p>BC-7M Series_1<br>11:35<br>23/9/2565</p></div>
              </div>
              <div class="scroll pscroll"><i>‹</i><div class="track"></div><i>›</i></div>
              <div class="buttons">
                <div class="btn adj"><svg viewBox="0 0 22 16"><path d="M0 9h22v6H0z" fill="#36b02c"/><path d="M1 3h5v4H1zM8.500 3h5v4h-5zM16 3h5v4h-5z" fill="#1b7f1b"/></svg><span>Adjust test<br>panel</span></div>
                <div class="btn"><svg class="s" viewBox="0 0 16 16"><path d="M1.500 2h13v10H7l-3 2.500V12H1.500z" fill="none" stroke="#2f9b2f" stroke-width="1.400"/></svg><span>Comm.<br>Record</span></div>
                <div class="btn"><svg class="s" viewBox="0 0 16 16"><path d="M1.500 7Q2 1.500 8 1.500q4 0 5.500 3.500M14.500 9q-.5 5.500-6.500 5.500-4 0-5.500-3.500M14.500 2v3.500H11M1.500 14v-3.500H5" fill="none" stroke="#2f9b2f" stroke-width="1.500"/><path d="M8 4.500v7" stroke="#2f9b2f" stroke-width="2.400"/></svg><span>Refresh<br>Sample</span></div>
                <div class="btn"><svg class="s"><use href="#smear"/></svg><span>To Smear<br>Validation</span></div>
              </div>
            </div>
          </div>
        </div>
      </section>
    </div>

    <footer class="w10bar">
      <div class="wb"><svg><use href="#win10"/></svg></div>
      <div class="wb"><svg viewBox="0 0 16 16"><circle cx="8" cy="8" r="6.300" fill="none" stroke="#fff" stroke-width="1.800"/></svg></div>
      <div class="wb"><svg viewBox="0 0 16 16"><path d="M2 1v2.500h8V1M2 15v-2.500h8V15M2 5.500h8v5H2zM13.500 1v14M12 6h3" fill="none" stroke="#fff"/></svg></div>
      <div class="wb"><svg class="l"><use href="#folder"/></svg></div>
      <div class="wb act"><svg class="l"><use href="#xpert"/></svg></div>
      <div class="wb run"><svg class="l"><use href="#tv"/></svg></div>
      <div class="tray"><svg><use href="#up"/></svg><svg viewBox="0 0 12 12"><path d="M2 3.500h6v6H2zM3 1q2-1 4 0M3 12q2 1 4 0M8 5h2.500v3H8" fill="none" stroke="#eee"/></svg><svg viewBox="0 0 12 12"><g fill="none" stroke="#eee"><circle cx="6" cy="6" r="5.300"/><ellipse cx="6" cy="6" rx="2.300" ry="5.300"/><path d="M1 4h10M1 8h10"/></g><circle cx="9.500" cy="9.500" r="2.500" fill="#ddd"/></svg><svg><use href="#speaker"/></svg><span>ENG</span><p>12:57<br>28/9/2565</p><svg class="n"><use href="#note"/></svg></div>
    </footer>
    <div class="tooltip">โรงพยาบาล [v.1.65.4.23] - [LabMainListForm]</div>
    <div class="minibar inner"><i></i><svg><use href="#arrows"/></svg><svg viewBox="0 0 12 12"><path d="M1 4l5 5 5-5" fill="none" stroke="#666" stroke-width="2"/></svg></div>
    <svg class="float in"><use href="#float"/></svg>
  </section>

  <svg class="float out"><use href="#float"/></svg>
  <div class="minibar outer"><i></i><svg><use href="#arrows"/></svg><svg viewBox="0 0 12 12"><path d="M1 3l5 5 5-5" fill="none" stroke="#666" stroke-width="2"/></svg></div>

  <footer class="w11bar">
    <div class="weather"><svg viewBox="0 0 20 18"><circle cx="13" cy="6" r="5" fill="#f5a623"/><path d="M4 16a4 4 0 0 1 0-7 5 5 0 0 1 9-1 4 4 0 0 1 3 8z" fill="#dfe7f2"/></svg><p>86°F<br><span>Mostly cloudy</span></p></div>
    <div class="dock">
      <div class="d"><svg viewBox="0 0 20 20"><path d="M0 0h9.500v9.500H0zM10.500 0H20v9.500h-9.500zM0 10.500h9.500V20H0zM10.500 10.500H20V20h-9.500z" fill="#4cc3f2"/></svg></div>
      <div class="d"><svg viewBox="0 0 20 20"><path d="M10 1a9 9 0 1 1-6 16l-3 1 1-4A9 9 0 0 1 10 1z" fill="#6562b8"/><path d="M5 6.500h6.500v7H5zM12.500 9l3-2v6l-3-2z" fill="#fff"/></svg></div>
      <div class="d"><svg><use href="#edge"/></svg></div>
      <div class="d r"><svg><use href="#folder"/></svg></div>
      <div class="d r"><svg viewBox="0 0 20 20"><circle cx="10" cy="10" r="9.800" fill="#1ed760"/><path d="M4 7q6-2 12 1M5 10.500q5-1.500 10 1M5.500 13.500q4-1 8 1" fill="none" stroke="#123" stroke-width="1.700"/></svg></div>
      <div class="d r a"><svg><use href="#tv"/></svg></div>
      <div class="d r"><svg><use href="#rings"/></svg></div>
      <div class="d r h"><svg><use href="#flask"/></svg></div>
      <div class="d r"><svg><use href="#board"/></svg></div>
      <div class="d r"><svg viewBox="0 0 20 20"><rect x="1" y="3" width="18" height="15" fill="#050505" stroke="#999"/><path d="M1 4h18" stroke="#ddd" stroke-width="2"/><path d="M3 8l2 1.500L3 11M7 11h3M11 8h3" stroke="#ccc" fill="none"/></svg></div>
    </div>
    <div class="tray11"><svg><use href="#up"/></svg><span>ENG</span><svg class="w" viewBox="0 0 14 12"><path d="M1 5q6-6 12 0M3 7.500q4-4 8 0M5 9.500q2-2 4 0" fill="none" stroke="#eee" stroke-width="1.200"/><circle cx="7" cy="10.500" r="1" fill="#eee"/></svg><svg viewBox="0 0 14 12"><path d="M1 4.500v3h2L6 10V2L3 4.500zM9 4.500l3.500 3.500M12.500 4.500L9 8" fill="none" stroke="#eee" stroke-width="1.100"/></svg><svg viewBox="0 0 14 12"><rect x="1" y="3" width="11" height="7" rx="1.500" fill="none" stroke="#eee"/><path d="M2.500 4.500h5v4h-5zM13 5v3" fill="#eee" stroke="#eee"/></svg><p>12:57<br>28/9/2565</p></div>
  </footer>
</main>

<footer class="hostbar">
  <div class="hb"><svg><use href="#win10"/></svg></div>
  <div class="hb"><svg viewBox="0 0 16 16"><circle cx="10" cy="6" r="5" fill="none" stroke="#fff" stroke-width="1.300"/><path d="M6.500 9.500L.5 15.500" stroke="#fff" stroke-width="1.400"/></svg></div>
  <div class="hb"><svg><use href="#edge"/></svg></div>
  <div class="hb"><svg viewBox="0 0 16 16"><rect width="16" height="16" fill="#2a7fd4"/><path d="M2 3l2.500 9L7 3M9 5q0-2 2.300-2T13.500 5.500L9 11h5M9 13h5" fill="none" stroke="#fff" stroke-width="1.300"/></svg></div>
  <div class="hb"><svg viewBox="0 0 16 16"><circle cx="8" cy="8" r="7.600" fill="#d02c33"/><text x="8" y="10.500" class="dx">DX</text></svg></div>
  <div class="hb"><svg viewBox="0 0 16 16"><rect x="2" y="0" width="12" height="16" fill="#7f8a90"/><rect x="3.500" y="1.500" width="9" height="3.500" fill="#6fc3df"/><path d="M4 7.500h8M4 10.500h8M4 13.500h8" stroke="#e6eaec" stroke-width="1.800" stroke-dasharray="2 1"/></svg></div>
  <div class="hb on"><svg viewBox="0 0 16 16"><circle cx="8" cy="9" r="7" fill="#f7682c"/><path d="M8 2q6-4 6 3-3 3-6 1z" fill="#ffc93a"/><circle cx="8.500" cy="9" r="3.500" fill="#8a3fc0"/><path d="M1 6l3-3 3 5-3 6z" fill="#f9a62b"/></svg></div>
  <div class="hb"><svg viewBox="0 0 16 16"><ellipse cx="8" cy="5.500" rx="7" ry="4.500" fill="#e8dede"/><path d="M3 8l8-6" stroke="#d2333e" stroke-width="2"/><path d="M8 9l2 6M12 8l-3 6M7 12l8-1" stroke="#5a8fc0" stroke-width="1.300"/></svg></div>
  <div class="hb on"><svg viewBox="0 0 16 16"><ellipse cx="7" cy="9.500" rx="6.500" ry="5.500" fill="#dce6ee"/><circle cx="4" cy="9" r="1.500" fill="#3b9ad8"/><circle cx="7" cy="7" r="1.500" fill="#de3b34"/><circle cx="6.500" cy="12" r="1.500" fill="#3fae49"/><path d="M13 0v16" stroke="#d79a3f" stroke-width="2.500"/></svg></div>
  <div class="hb"><svg class="sm"><use href="#chrome"/></svg></div>
  <div class="hb"><svg viewBox="0 0 20 20"><g fill="none" stroke-width="2"><ellipse cx="7" cy="7" rx="4.500" ry="6" transform="rotate(-30 7 7)" stroke="#e2572f"/><ellipse cx="14" cy="7" rx="3.500" ry="5.500" transform="rotate(30 14 7)" stroke="#4fae4a"/><circle cx="11" cy="12" r="6" stroke="#3a95c7" fill="#101010"/></g></svg></div>
  <div class="hb"><svg viewBox="0 0 16 16"><rect width="16" height="16" fill="#3455ad"/><path d="M4 3h9L12 10H3zM2 13h12" stroke="#dfe9fa" stroke-width="1.500" fill="none"/><path d="M5 9l5-4v4z" fill="#dfe9fa"/></svg></div>
  <div class="hb"><svg viewBox="0 0 16 16"><path d="M.5 1h15v10H.5z" fill="#222" stroke="#aaa"/><path d="M3 6h10" stroke="#999"/><path d="M4 13.500h12v2H4z" fill="#b8b8b8"/></svg></div>
  <div class="hb"><svg viewBox="0 0 16 16"><g fill="none" stroke-width="2"><path d="M4 6l5-3 4 4-2 5" stroke="#e3742c"/><path d="M12 10l-5 3-4-4 1-4" stroke="#b6451f"/></g></svg></div>
  <div class="hb"><svg><use href="#board"/></svg></div>
  <div class="hb"><svg><use href="#flask"/></svg></div>
  <div class="hb on"><svg viewBox="0 0 16 16"><circle cx="8" cy="8" r="7.600" fill="#f2f2f2"/><path d="M4 5.500h3M9 4.500h3M3 8h10M4 11h8" stroke="#444" stroke-width="1.100"/></svg></div>
  <div class="hb on"><svg><use href="#tv"/></svg></div>
  <div class="hb on"><svg viewBox="0 0 16 16"><rect width="16" height="16" rx="1.500" fill="#0db80d"/><path d="M8 3c7 0 7 6 3 8l-3 3v-2C1 11 1 3 8 3z" fill="#fff"/></svg></div>
  <div class="hb on"><svg><use href="#folder"/></svg></div>
  <div class="hb on"><svg viewBox="0 0 16 16"><rect x="2" y="3" width="9" height="11" fill="#444" stroke="#888"/><circle cx="9" cy="7" r="4.500" fill="#27346e" stroke="#ccc" stroke-width="1.300"/><path d="M12 10l2 5" stroke="#bbb" stroke-width="1.500"/></svg></div>
  <div class="htray"><svg><use href="#up"/></svg><svg viewBox="0 0 18 14"><path d="M4 5h12v7H4zM17 7v3M1 2v3h4V2M3 5v3" fill="none" stroke="#fff" stroke-width="1.200"/><path d="M6 6.500h8v4H6z" fill="#fff"/></svg><svg viewBox="0 0 18 14"><path d="M5 2h12v8H7M9 13h6M12 10v3M1 1h4v4H1zM3 5v8" fill="none" stroke="#fff" stroke-width="1.200"/></svg><svg><use href="#speaker"/></svg><span>ENG</span><span class="t">12:57</span><svg class="n"><use href="#note"/></svg></div>
</footer>
</body>
</html>
```

FILE: styles.css
```css
* { box-sizing: border-box; margin: 0; padding: 0; }
body { width: 1600px; height: 900px; overflow: hidden; background: #1a1a1a; font-family: "Liberation Sans", Arial, sans-serif; font-size: 10.700px; display: flex; flex-direction: column; }
svg { display: block; flex: none; }
.defs { position: absolute; }
i, em, u { font-style: normal; text-decoration: none; }

/* outer remote-control tab strip */
.outer-tabs { height: 23.500px; flex: none; background: #fff; display: flex; align-items: center; font: 12.500px "Open Sans", sans-serif; color: #111; }
.outer-tabs .tvi { width: 16px; height: 16px; margin: -8px 3px 0 3px; }
.otab { height: 24px; width: 76px; border: solid #bbb; border-width: 0 1px; padding-left: 8px; display: flex; align-items: center; gap: 9px; line-height: 18px; padding-bottom: 6px; letter-spacing: -.5px; white-space: nowrap; background: linear-gradient(135deg, transparent 50%, #888 50%) 30px 18px / 6px 6px no-repeat, linear-gradient(225deg, transparent 50%, #888 50%) 36px 18px / 6px 6px no-repeat; }
.otab b { font: bold 11.500px "DejaVu Sans", sans-serif; }
.plus { font: 13px "DejaVu Sans", sans-serif; margin-left: 11px; margin-top: -6px; color: #000; }
.outer-tabs .winctl { width: 110px; height: 14px; margin: -3px 13px 0 auto; }

.remote { position: relative; flex: none; height: 846.500px; margin: 0 47px; width: 1506px; background: #000; display: flex; flex-direction: column; justify-content: flex-end; }

/* desktop shortcuts */
.desk-col { position: absolute; top: 6px; width: 76px; }
.desk-col.left { left: -8.500px; }
.desk-col.right { left: 1423px; }
.dicon { position: relative; height: 78.450px; display: flex; flex-direction: column; align-items: center; color: #fff; font: 10.300px/12px "Open Sans", sans-serif; letter-spacing: -.38px; text-align: center; white-space: nowrap; }
.dicon > svg { width: 38px; height: 38px; margin-bottom: 1.500px; }
.dicon .sc { position: absolute; left: 19px; top: 28px; width: 10px; height: 10px; }

/* inner window */
.window { position: absolute; left: 61px; top: 1px; width: 1385px; height: 803px; border-radius: 6px; overflow: hidden; background: #2f5490; display: flex; flex-direction: column; }
.win-tabs { height: 24.500px; flex: none; background: #fff; display: flex; align-items: center; font: 10.300px "Open Sans", sans-serif; color: #222; }
.win-tabs .tvi { width: 13px; height: 13px; margin: 0 2px; }
.wtab { width: 88px; height: 24px; border: solid #bbb; border-width: 0 1px; padding-left: 6px; display: flex; align-items: center; letter-spacing: -.5px; white-space: nowrap; background: linear-gradient(135deg, transparent 50%, #777 50%) 38px 20px / 4px 4px no-repeat, linear-gradient(225deg, transparent 50%, #777 50%) 42px 20px / 4px 4px no-repeat; }
.wtab i { color: #6ea4dd; font: 13px "DejaVu Sans", sans-serif; margin-left: 4px; }
.wtab b { font: bold 10px "DejaVu Sans", sans-serif; margin-left: 6px; color: #000; }
.win-tabs .plus { font-size: 11.500px; margin: 0 0 0 8px; }
.win-tabs .winctl { width: 90px; height: 14px; margin-left: auto; margin-right: 6.500px; margin-bottom: 2px; }

.app-head { height: 53px; flex: none; background: #10203f; color: #fff; display: flex; }
.app-head b { font-size: 10.500px; }
.logo { width: 70px; text-align: center; padding-top: 4px; }
.logo svg { width: 32px; height: 32px; margin: 0 auto 1px; }
.logo em { font-size: 12px; }
.hcell { display: flex; flex-direction: column; align-items: center; }
.hcell b { line-height: 12px; }
.all { width: 66px; }
.all span { font: 18px/41px "Open Sans", sans-serif; height: 35px; }
.found { width: 87px; background: #31538d; margin-left: 9px; }
.found strong { font: bold 20px/39px "Open Sans", sans-serif; height: 35px; }
.qc { width: 82px; }
.qc svg { width: 24px; height: 22px; margin: 12px 0 1px; }
.alert { width: 64px; height: 31px; margin: 8px 0 0 564px; background: #112e51; border: 1px solid #0a1a33; display: flex; align-items: center; padding-left: 7px; gap: 11px; font: 17px "Open Sans", sans-serif; }
.alert svg { width: 18px; height: 17px; }
.more { width: 132px; padding: 13px 0 0 71px; font: bold 11px/14px "Liberation Sans", sans-serif; display: flex; gap: 11px; white-space: nowrap; }
.more i { margin-top: 8px; height: 0; border: 3.500px solid transparent; border-top: 4px solid #fff; }
.user { flex: 1; background: #10203f; display: flex; flex-direction: column; }
.user-row { height: 38px; background: #11202f; display: flex; align-items: center; }
.avatar { width: 18px; height: 18px; margin-left: 7px; }
.uname { font: 10.500px "DejaVu Sans", sans-serif; color: #a9b3c0; margin-left: 9px; }
.status { width: 178px; height: 28px; margin-left: auto; margin-right: 4.500px; margin-top: -1px; }
.status text { font: bold 10px "Liberation Sans", sans-serif; text-anchor: middle; fill: #10331a; }
.direct { text-align: right; padding-right: 3px; line-height: 11px; white-space: nowrap; }

.toolbar { height: 42px; flex: none; background: #31538d; border-bottom: 1.500px solid #1e3c70; color: #fff; display: grid; grid-template-columns: repeat(9, 64.300px) 67px 66px 66px 64px 69px 72px 64px 44px 1fr; margin-left: -1px; }
.tool { position: relative; display: flex; flex-direction: column; align-items: center; padding-top: 6px; font: bold 8.700px/10px "Liberation Sans", sans-serif; white-space: nowrap; }
.tool > svg { width: 19px; height: 19px; margin-bottom: 4.500px; }
.tool > svg.wide { width: 24px; }
.tool text { font: bold 8.500px "Liberation Sans", sans-serif; text-anchor: middle; fill: #fff; }
.spin { display: flex; flex-direction: column; align-items: center; gap: 17px; padding: 9px 0 0 16px; }
.spin i { width: 0; height: 0; border: 3.500px solid transparent; }
.spin .inc { border-top: 0; border-bottom: 4px solid #6c8cbd; }
.spin .dec { border-bottom: 0; border-top: 4px solid #a8ceff; }
.search { background: #4f83bf; display: flex; align-items: center; padding: 1px 0 0 2px; gap: 1.500px; height: 39px; }
.pill { width: 220px; height: 23px; border-radius: 12px; background: #d9ecfa; border: 1px solid #eff8ff; display: flex; align-items: center; padding: 0 7px 0 9px; color: #788c9c; font-size: 10.600px; white-space: nowrap; }
.pill i { border: 3.500px solid transparent; border-top: 4.500px solid #33506e; border-bottom: 0; margin-right: 9px; }
.pill svg { width: 12px; height: 12px; margin-left: auto; }
.adv { flex: 1; height: 24px; background: #fff; border: 1.500px solid #3fc862; display: flex; align-items: center; justify-content: center; color: #111; font-size: 10.700px; padding-right: 2px; }

.redbox { position: absolute; border: 5px solid #dc1f2a; z-index: 5; }
.redbox.comm { left: -1px; top: 1px; width: 69px; height: 51px; }
.redbox.row { left: 7px; top: -5px; width: 186px; height: 44px; }

.work { flex: 1; display: flex; padding: 0 2px 2px 3px; min-height: 0; }

/* sample list */
.list { width: 282px; flex: none; background: #fff; display: flex; flex-direction: column; color: #1b2d5c; overflow: hidden; }
.lhead { display: grid; grid-template-columns: 65.500px 113px 72px 1fr; height: 32px; background: #eafdfd; border-bottom: 1px solid #c9d2d6; line-height: 36.500px; color: #10151c; font-size: 10.500px; white-space: nowrap; }
.lhead span { padding-left: 4.500px; border-right: 1px solid #d3dfe0; }
.lhead span:last-child, .lrow > span:last-of-type { border: 0; }
.lrows { height: 541px; }
.lrow { position: relative; height: 36px; display: grid; grid-template-columns: 65.500px 113px 72px 1fr; font-size: 10.700px; letter-spacing: -.15px; line-height: 12px; }
.lrow > span { padding: 5px 0 0 2.500px; border-right: 1px solid #dadde1; white-space: nowrap; overflow: hidden; }
.lrow > span:first-child { display: flex; justify-content: center; align-items: center; gap: 2.500px; padding: 2px 0 0 0; }
.lrow svg { width: 15px; height: 15px; }
.sel { background: #bbdcee; }
.scroll { display: flex; align-items: center; color: #333; }
.scroll i { font: bold 14px/10px "Liberation Sans", sans-serif; width: 12px; text-align: center; padding-bottom: 3px; }
.track { background: #c9c9c9; height: 11px; }
.lscroll { margin: 41px 0 3px; height: 11px; }
.lscroll .track { width: 239px; margin-right: auto; }
.legend { border-top: 2.500px solid #24467f; flex: 1; display: flex; align-items: center; padding-left: 5px; gap: 21px; }
.legend > svg { width: 15.100px; height: 15.100px; }
.legend text { font: bold 9.500px "Liberation Sans", sans-serif; text-anchor: middle; fill: #fff; }
.upbtn { width: 35px; flex: none; height: 18px; border: 1.500px solid #2a4a80; border-radius: 2px; display: flex; align-items: center; justify-content: center; margin-right: -11px; }
.upbtn svg { width: 14px; height: 9px; }

/* detail side */
.detail { flex: 1; margin-left: 4px; background: #fff; display: flex; flex-direction: column; min-width: 0; }
.tabs { height: 32px; background: #ececec; border-bottom: 1px solid #cfd4d6; display: flex; color: #4d5656; white-space: nowrap; line-height: 36.500px; }
.tab { background: #eafdfd; height: 31px; font-size: 10.700px; flex: none; }
.tab.star { width: 19px; padding: 9px 0 0 1px; }
.tab.star svg { width: 15px; height: 15px; }
.info { width: 79px; padding-left: 7px; }
.tab.on { width: 88px; background: linear-gradient(#eafdfd 4px, #24467f 4px, #24467f 6px, #fff 6px); border: solid #bcc7ca; border-width: 0 1px; padding-left: 7px; height: 32px; }
.ruo { width: 106px; padding-left: 8px; }
.imsg { width: 90px; padding-left: 8px; }
.reex { width: 118px; padding-left: 8px; display: flex; align-items: flex-start; gap: 2px; }
.reex b { width: 15px; height: 15px; border-radius: 50%; background: #c8141a; color: #fff; font-size: 11px; line-height: 15px; text-align: center; margin-top: 10px; }
.hist { width: 93px; padding-left: 8px; }
.micro { width: 78px; padding-left: 8px; }

.panes { flex: 1; display: flex; padding: 4.800px 5px 6px 5px; gap: 6px; min-height: 0; }
.panel { border: 1px solid #b4c1c9; background: #fff; }
.panel h3 { height: 18.500px; background: #e9fcfd; border-bottom: 1px solid #c8dce0; font-size: 10.700px; line-height: 18px; padding: 0 9px 0 5px; display: flex; align-items: center; color: #12203c; white-space: nowrap; }
.panel h3 svg { width: 11px; height: 11px; margin-left: auto; }
.panel h3 .edit { margin-right: 12px; }
.panel h3 .edit + svg { margin-left: 0; }
.col-a { width: 149.500px; flex: none; display: flex; flex-direction: column; gap: 6px; }
.pinfo { height: 234px; }
.pcom { height: 108px; }
.pcom h3, .prule h3 { padding-right: 11px; }
.prule { flex: 1; }
.pinfo ul { list-style: none; padding: 6px 0 0 4px; color: #111; }
.pinfo li { height: 15.100px; line-height: 15px; display: flex; align-items: center; white-space: nowrap; letter-spacing: -.05px; }
.pinfo li::before { content: ""; width: 3px; height: 3px; background: #4c80b5; margin-right: 5.500px; }
.pinfo li span { margin-left: 11px; color: #444; }
.pinfo .gap { margin-top: 7.500px; }

.results { width: 575px; flex: none; display: flex; flex-direction: column; }
.rrow { display: grid; grid-template-columns: 34px 69px 35px 52px 1fr; height: 15.850px; line-height: 14.500px; color: #1a1a1a; white-space: nowrap; }
.rrow > * { padding-left: 2px; }
.rrow > b { font-size: 10.500px; color: #000; padding-left: 1.500px; }
.rrow > em { padding-left: 148px; font-size: 10.300px; }
.rhead { grid-template-columns: 34px 69px 35px 52px 51.700px 47.300px 48px 1fr; height: 18.500px; background: #e9fcfd; border-bottom: 1px solid #c8dce0; line-height: 19.500px; }
.rhead > span { padding-left: 5px; font-size: 10.600px; border-right: 1px solid #d5e2e5; }
.rhead > span:last-child { border: 0; }
.rbody { flex: 1; background: linear-gradient(#d9dcdf, #d9dcdf) 33px 0 / 1px 100% no-repeat, linear-gradient(#d9dcdf, #d9dcdf) 102px 0 / 1px 100% no-repeat, linear-gradient(#d9dcdf, #d9dcdf) 137px 0 / 1px 100% no-repeat, linear-gradient(#d9dcdf, #d9dcdf) 189px 0 / 1px 100% no-repeat, linear-gradient(#d9dcdf, #d9dcdf) 241px 0 / 1px 100% no-repeat, linear-gradient(#d9dcdf, #d9dcdf) 288px 0 / 1px 100% no-repeat, linear-gradient(#d9dcdf, #d9dcdf) 336px 0 / 1px 100% no-repeat; }
.group + .group { box-shadow: 0 -1px 0 #c9cdd0; }
.high .hflag { padding-left: 17px; color: #c5161d; }
.high b { color: #c5161d; }

.col-c { flex: 1; display: flex; flex-direction: column; gap: 6px; min-width: 0; }
.upper { height: 368px; display: flex; justify-content: space-between; }
.graphs { display: grid; grid-template-columns: 112px 112px; grid-template-rows: 97px 130px; gap: 5px 3.500px; }
.graph > svg { width: 108.500px; height: 75.500px; margin: .5px auto 0; }
.graph.diff > svg { height: 108px; }
.graph text { font: 7px "Liberation Sans", sans-serif; fill: #fff; }
.graph text.big { font-size: 9.800px; }
.graph .ax { fill: none; stroke: #e8e8e8; stroke-width: 1; }
.graph .dash { fill: none; stroke: #e8e8e8; stroke-width: 1; stroke-dasharray: 2 1; }
.panel h3 .mag { width: 13px; height: 13px; margin-right: 7px; }
.notes { width: 114px; display: flex; flex-direction: column; gap: 6px; }
.notes h3 { padding-right: 11px; }
.pflag { height: 179px; }
.pexp { flex: 1; }
.panel.pexp h3 { align-items: flex-start; line-height: 12px; }
.pexp h3 svg { align-self: center; }

.proc { flex: 1; display: flex; flex-direction: column; }
.proc-head { display: flex; height: 18px; line-height: 17.500px; white-space: nowrap; }
.proc-head b { width: 138px; padding-left: 5px; background: #e9fcfd; color: #12203c; font-size: 10.700px; }
.proc-head span { flex: 1; margin: 1px 1px 0 0; background: #2fb325; color: #fff; font-weight: bold; font-size: 9.900px; line-height: 16px; padding-left: 6px; }
.steps { display: flex; height: 92px; padding-top: 17px; margin: 0 6px 0 3px; overflow: hidden; }
.step { width: 72.200px; flex: none; text-align: center; font-size: 8.800px; line-height: 10px; color: #333; white-space: nowrap; }
.step i { display: block; height: 10px; line-height: 11.500px; font-size: 9.500px; }
.step b { font-size: 8.500px; color: #222; display: block; line-height: 12px; margin-left: -3px; margin-right: -3px; }
.step u { display: block; height: 15px; background: linear-gradient(#cfcfe8, #cfcfe8) 0 6px / 100% 2.500px no-repeat; position: relative; }
.step:first-child u { background-position: 36px 6px; }
.step.last u { background-size: 50% 2.500px; }
.step u::after { content: ""; position: absolute; left: 33px; top: 4px; width: 6.500px; height: 6.500px; border: 1.500px solid #9aa9c4; border-radius: 50%; background: #fff; }
.step p { line-height: 9.800px; padding-top: 1px; }
.pscroll { margin: 14px 5px 0 3px; height: 11px; }
.pscroll .track { width: 289px; }
.pscroll i:last-child, .lscroll i:last-child { margin-left: auto; }
.buttons { display: grid; grid-template-columns: repeat(3, 97px); gap: 16px 15px; padding: 9px 0 0 15px; grid-template-rows: 32px 32px; }
.btn { border: 1.200px solid #45b03e; display: flex; align-items: center; color: #42a83c; font-size: 10.300px; line-height: 12.300px; gap: 5px; padding-left: 5px; white-space: nowrap; }
.btn.adj { grid-column: 3; padding-left: 2px; gap: 2px; }
.btn.adj svg { width: 21px; height: 15px; }
.btn .s { width: 15px; height: 15px; }

.w10bar { height: 28.500px; flex: none; background: #101010; display: flex; }
.wb { width: 35.200px; display: flex; align-items: center; justify-content: center; }
.wb svg { width: 12.500px; height: 12.500px; }
.wb svg.l { width: 17px; height: 17px; }
.wb.act { background: #3b3b3b; }
.wb.act, .wb.run { border-bottom: 1px solid #76b9ed; }
.tray { margin-left: auto; display: flex; align-items: center; color: #eee; font: 9.300px/12.500px "Open Sans", sans-serif; margin-right: 17px; gap: 6px; letter-spacing: -.3px; }
.tray svg { width: 11.500px; height: 11.500px; }
.tray p { text-align: center; margin: 0 5px 0 0; }
.tray .n { width: 12.500px; height: 12.500px; }

.tooltip { position: absolute; left: 680px; top: 648px; width: 198px; height: 23.500px; background: #2b2b2b; color: #f0f0f0; font-size: 9.200px; line-height: 21px; padding-left: 7px; white-space: nowrap; }
.minibar { position: absolute; background: #f0f0f0; border: 1px solid #d0d0d0; display: flex; align-items: center; justify-content: space-between; }
.minibar i { align-self: stretch; width: 25%; background: repeating-linear-gradient(90deg, #bbb 0 1px, transparent 1px 4px), repeating-linear-gradient(#bbb 0 1px, transparent 1px 4px), #fff; }
.minibar.inner { left: 920px; top: 23.500px; width: 40px; height: 16px; }
.minibar.outer { left: 1018px; top: 0; width: 51px; height: 19px; padding-right: 2px; }
.minibar.inner svg { width: 9px; height: 9px; }
.minibar.inner svg:last-child { width: 12px; height: 12px; }
.minibar.outer svg { width: 11px; height: 11px; }
.minibar.outer svg:last-child { width: 15px; height: 15px; }
.float { position: absolute; width: 19px; height: 40px; }
.float.in { right: 0; top: 700px; width: 17px; height: 36px; }
.float.out { right: 0; top: 729px; }

.w11bar { height: 37px; background: #202020; display: flex; }
.weather { display: flex; width: 581px; padding: 7.500px 0 0 15px; gap: 5px; color: #eee; font: 9.600px/12.500px "Open Sans", sans-serif; letter-spacing: -.05px; }
.weather svg { width: 19px; height: 18px; margin-top: 2px; }
.weather span { color: #bbb; }
.dock { display: flex; }
.d { width: 34.500px; position: relative; display: flex; justify-content: center; padding-top: 9.500px; }
.d svg { width: 19px; height: 19px; }
.d.r::after { content: ""; position: absolute; bottom: 3px; left: 15px; width: 5px; height: 2px; background: #999; border-radius: 1px; }
.d.a::after { width: 13px; left: 11px; background: #67b9dd; }
.d.a, .d.h { background: linear-gradient(#2f2f2f, #2f2f2f) 2px 3px / 30px 31px no-repeat; }
.tray11 { margin-left: auto; display: flex; align-items: center; color: #eee; font: 9.300px/12.500px "Open Sans", sans-serif; padding: 2px 11px 0 0; gap: 6px; }
.tray11 svg { width: 13px; height: 12px; }
.tray11 span { margin: 0 7px 0 7px; }
.tray11 p { text-align: right; margin-left: 5px; }

.hostbar { height: 30px; flex: none; background: #101010; display: flex; }
.hb { width: 37.070px; display: flex; align-items: center; justify-content: center; flex: none; position: relative; }
.hb:first-child { margin-left: -1px; }
.hb svg { width: 16px; height: 16px; }
.hb .sm { width: 14px; height: 14px; }
.hb.on::after { content: ""; position: absolute; bottom: 0; left: 5px; right: 5px; height: 2px; background: #6795ba; }
.dx { font: bold 6.500px "Liberation Sans", sans-serif; text-anchor: middle; fill: #fff; }
.htray { margin-left: auto; display: flex; align-items: center; color: #fff; font: 12px "Open Sans", sans-serif; letter-spacing: -.4px; gap: 8px; padding: 0 20px 2px 0; margin-right: 4px; border-right: 1px solid #555; }
.htray svg { width: 16px; height: 14px; }
.htray svg:first-child { width: 14px; }
.htray .t { margin: 0 9px 0 5px; }
.htray .n { height: 16px; }
```
